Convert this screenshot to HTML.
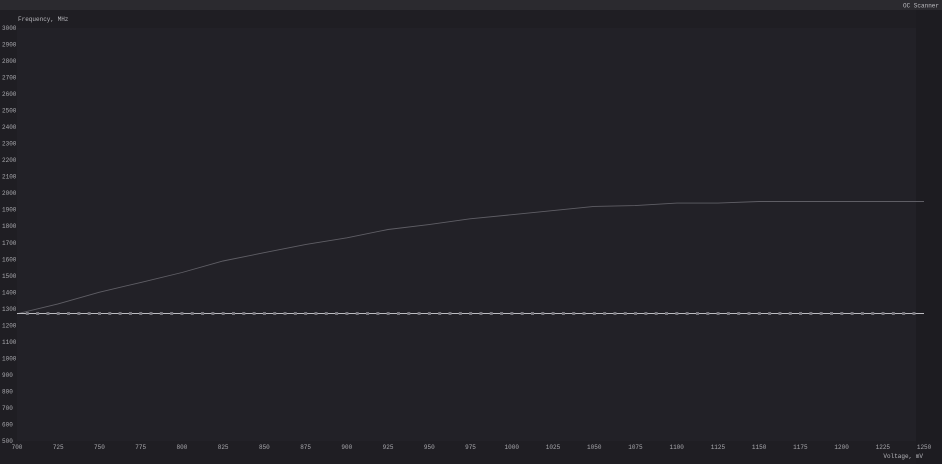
<!DOCTYPE html>
<html><head><meta charset="utf-8"><style>
html,body{margin:0;padding:0;width:942px;height:464px;overflow:hidden;background:#1e1d22;font-family:"Liberation Mono",monospace;}
svg{display:block}
</style></head><body>
<svg id="s" width="942" height="464" xmlns="http://www.w3.org/2000/svg">
<rect x="0" y="0" width="942" height="464" fill="#1f1e23"/>
<rect x="0" y="0" width="942" height="10" fill="#2b2a2f"/>
<rect x="17" y="28" width="899" height="413" fill="#222127"/>
<rect x="916" y="10" width="26" height="454" fill="#1d1c21"/>
<text x="939" y="7.5" font-size="6" fill="#bdbdc2" text-anchor="end" font-family="Liberation Mono, monospace">OC Scanner</text>
<text x="18" y="21" font-size="6" fill="#b5b5ba" font-family="Liberation Mono, monospace">Frequency, MHz</text>
<text x="923" y="458" font-size="6" fill="#b5b5ba" text-anchor="end" font-family="Liberation Mono, monospace">Voltage, mV</text>
<g id="g"></g>
<polyline fill="none" stroke="#5f5e65" stroke-width="0.9" points="17,313.8 58,303.9 99,292.3 141,282.4 182,272.5 223,261 264,252.7 306,244.4 347,237.8 388,229.5 429,224.6 470,218.8 512,214.7 553,210.6 594,206.4 635,205.6 677,203.1 718,203.1 759,201.5 924,201.5"/>
<line x1="17" y1="313.5" x2="924" y2="313.5" stroke="#bdbdc2" stroke-width="1.1"/>
<g id="m"></g>
</svg>
<script>
var g=document.getElementById('g'),h='';
for(var i=0;i<=25;i++){var f=3000-i*100,y=28+i*16.52;
h+='<text x="2" y="'+(y+2)+'" font-size="6" fill="#a9a9ae" font-family="Liberation Mono, monospace">'+f+'</text>';}
for(var j=0;j<=22;j++){var v=700+j*25,x=17+j*41.23;
h+='<text x="'+x+'" y="449" font-size="6" fill="#a9a9ae" text-anchor="middle" font-family="Liberation Mono, monospace">'+v+'</text>';}
g.innerHTML=h;var m='';
for(var k=1;k<88;k++){var x=17+k*10.31;
m+='<rect x="'+(x-1.5)+'" y="312" width="3" height="3" fill="#77767d"/>';}
document.getElementById('m').innerHTML=m;
</script>
</body></html>
